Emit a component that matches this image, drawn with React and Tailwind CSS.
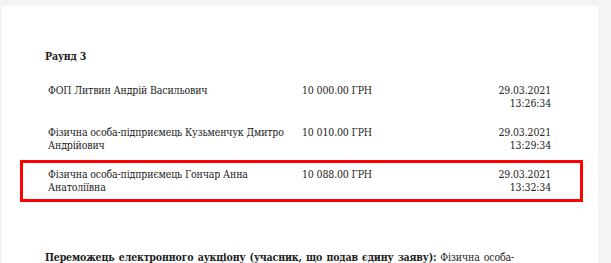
const rows = [
  {
    name: "ФОП Литвин Андрій Васильович",
    amount: "10 000.00 ГРН",
    date: "29.03.2021",
    time: "13:26:34",
  },
  {
    name: "Фізична особа-підприємець Кузьменчук Дмитро Андрійович",
    amount: "10 010.00 ГРН",
    date: "29.03.2021",
    time: "13:29:34",
  },
  {
    name: "Фізична особа-підприємець Гончар Анна Анатоліївна",
    amount: "10 088.00 ГРН",
    date: "29.03.2021",
    time: "13:32:34",
    winner: true,
  },
];

const App = () => {
  return (
    <div className="w-[611px] h-[263px] overflow-hidden bg-[#f4f4f4] pt-[6px] pl-[2px] font-['DejaVu_Serif',serif] font-stretch-condensed text-[10.5px] tracking-[-0.15px] leading-[12.5px] text-[#222]">
      <div className="w-[596px] h-[300px] bg-white pt-[44px]">
        <h3 className="pl-[43px] font-bold">Раунд 3</h3>

        <div className="mt-[13px]">
          {rows.map((row) => (
            <div
              key={row.time}
              className={`ml-[18px] mr-[15px] flex border-[3px] py-[5.5px] pl-[25px] pr-[29px] ${
                row.winner ? "border-[#ff0000]" : "border-transparent"
              }`}
            >
              <div className="w-[254px] shrink-0 pr-[4px]">{row.name}</div>
              <div className="flex-1">{row.amount}</div>
              <div className="text-right">
                {row.date}
                <br />
                {row.time}
              </div>
            </div>
          ))}
        </div>

        <p className="mt-[49px] w-[512px] pl-[43px] text-justify">
          <b>Переможець електронного аукціону (учасник, що подав єдину заяву):</b>{" "}
          Фізична особа-підприємець Гончар Анна Анатоліївна
        </p>
      </div>
    </div>
  );
};

export default App;
